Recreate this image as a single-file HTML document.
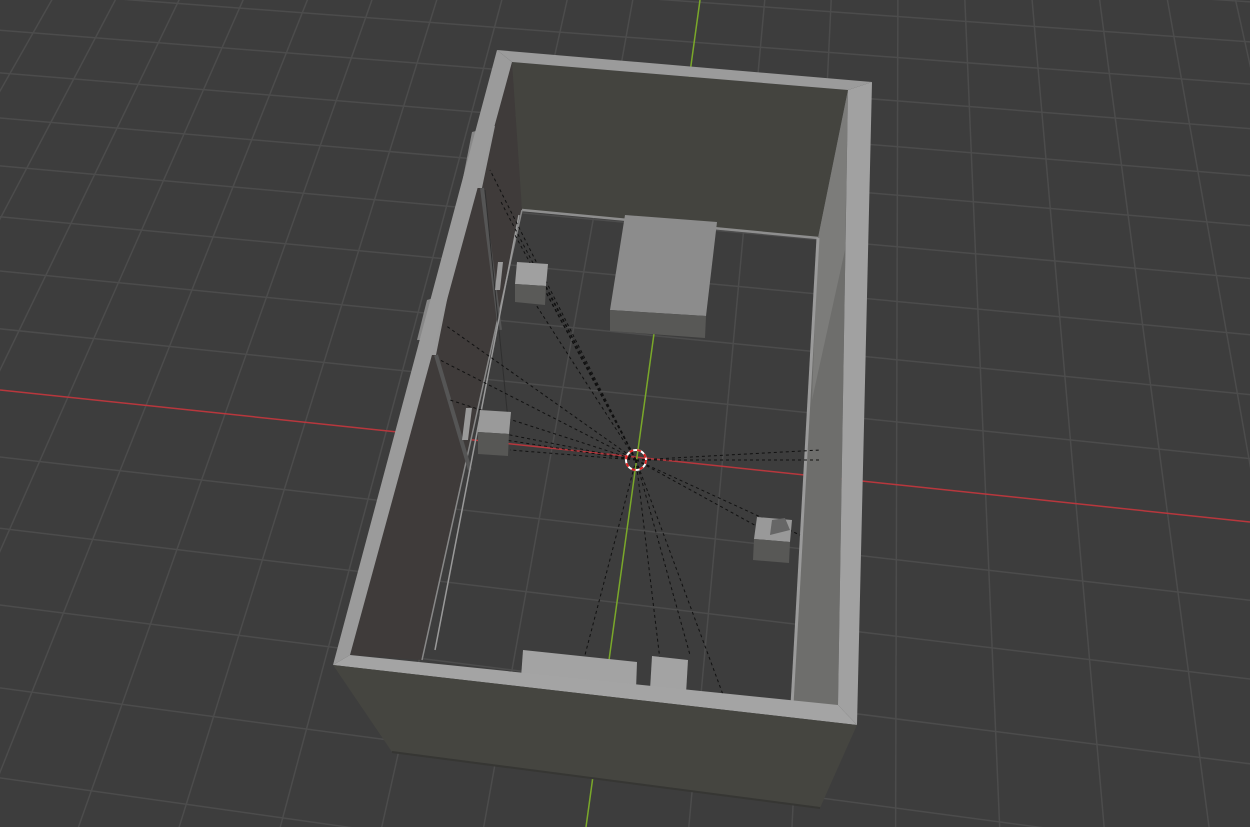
<!DOCTYPE html>
<html><head><meta charset="utf-8"><style>
html,body{margin:0;padding:0;background:#3d3d3d;overflow:hidden;width:1250px;height:827px}
svg{display:block}
</style></head><body>
<svg id="s" width="1250" height="827" viewBox="0 0 1250 827" xmlns="http://www.w3.org/2000/svg">
<rect width="1250" height="827" fill="#3d3d3d"/>
<g id="grid" stroke="#4c4c4c" stroke-width="1.5" fill="none"></g>
<!-- axes -->
<line x1="0" y1="390" x2="1250" y2="522" stroke="#b8373d" stroke-width="1.5"/>
<line x1="700" y1="0" x2="586" y2="827" stroke="#7aa82a" stroke-width="1.5"/>

<!-- left wall interior face -->
<polygon points="512,62 522,210 422,660 350,655" fill="#3f3b3a"/>
<!-- back wall interior -->
<polygon points="512,62 848,90 818,238 522,210" fill="#44443f"/>
<line x1="522" y1="210" x2="818" y2="238" stroke="#8e8e8e" stroke-width="2.5"/>
<!-- right wall inner face -->
<polygon points="848,90 838,705 792,705 818,238" fill="#6e6e6c"/>
<polygon points="848,90 818,238 812,400 845,250" fill="#7c7c7a"/>
<line x1="818" y1="238" x2="792" y2="705" stroke="#9a9a9a" stroke-width="3"/>
<line x1="522" y1="210" x2="422" y2="660" stroke="#888" stroke-width="1.5"/>

<!-- window details left -->
<polygon points="483,128 495,126 482,188 470,188" fill="#9a9a9a"/>
<polygon points="472,132 480,130 470,178 463,178" fill="#888"/>
<polygon points="438,287 450,285 436,355 424,355" fill="#9a9a9a"/>
<polygon points="427,300 434,298 423,340 417,340" fill="#888"/>
<line x1="482" y1="188" x2="500" y2="330" stroke="#555" stroke-width="4"/>
<line x1="436" y1="355" x2="470" y2="470" stroke="#555" stroke-width="4"/>
<line x1="485" y1="190" x2="508" y2="420" stroke="#2f2f2f" stroke-width="1"/>
<polygon points="498,262 503,262 500,290 495,290" fill="#9a9a9a"/>
<polygon points="466,408 472,408 468,440 462,440" fill="#9a9a9a"/>
<line x1="519" y1="215" x2="435" y2="650" stroke="#9a9a9a" stroke-width="1.5"/>

<!-- dashed light lines -->
<g stroke="#111" stroke-width="1" stroke-dasharray="3,3" fill="none">
<line x1="636" y1="460" x2="490" y2="170"/>
<line x1="636" y1="460" x2="500" y2="200"/>
<line x1="636" y1="460" x2="515" y2="235"/>
<line x1="636" y1="460" x2="520" y2="280"/>
<line x1="636" y1="460" x2="535" y2="265"/>
<line x1="636" y1="460" x2="545" y2="290"/>
<line x1="636" y1="460" x2="550" y2="300"/>
<line x1="636" y1="460" x2="445" y2="325"/>
<line x1="636" y1="460" x2="440" y2="360"/>
<line x1="636" y1="460" x2="450" y2="400"/>
<line x1="636" y1="460" x2="485" y2="430"/>
<line x1="636" y1="460" x2="505" y2="440"/>
<line x1="636" y1="460" x2="510" y2="450"/>
<line x1="636" y1="460" x2="820" y2="450"/>
<line x1="636" y1="460" x2="820" y2="460"/>
<line x1="636" y1="460" x2="760" y2="528"/>
<line x1="636" y1="460" x2="800" y2="535"/>
<line x1="636" y1="460" x2="585" y2="655"/>
<line x1="636" y1="460" x2="660" y2="660"/>
<line x1="636" y1="460" x2="725" y2="700"/>
<line x1="636" y1="460" x2="690" y2="655"/>
</g>

<!-- bed -->
<polygon points="625,215 717,222 706,316 610,310" fill="#8c8c8c"/>
<polygon points="610,310 706,316 705,338 610,331" fill="#585856"/>
<!-- small boxes -->
<polygon points="517,262 548,264 546,286 515,284" fill="#a0a0a0"/>
<polygon points="515,284 546,286 545,305 515,302" fill="#5a5a58"/>
<polygon points="480,410 511,412 509,434 478,432" fill="#9a9a9a"/>
<polygon points="478,432 509,434 508,456 478,454" fill="#575755"/>
<polygon points="757,517 792,520 790,542 754,539" fill="#999"/>
<polygon points="754,539 790,542 789,563 753,560" fill="#585856"/>
<polygon points="772,520 785,518 790,530 770,535" fill="#666"/>
<!-- front boxes -->
<polygon points="523,650 637,662 636,690 521,678" fill="#a3a3a3"/>
<polygon points="652,656 688,660 686,694 650,690" fill="#a3a3a3"/>

<!-- rim -->
<polygon points="497,50 512,62 350,655 333,665" fill="#9b9b9b"/>
<polygon points="497,50 872,82 848,90 512,62" fill="#9b9b9b"/>
<polygon points="872,82 857,725 838,705 848,90" fill="#a1a1a1"/>
<polygon points="333,665 350,655 838,705 857,725" fill="#a4a4a4"/>
<!-- front face -->
<polygon points="333,665 857,725 820,808 392,752" fill="#454540"/>
<line x1="392" y1="752" x2="820" y2="808" stroke="#363633" stroke-width="2"/>

<!-- 3d cursor -->
<circle cx="636" cy="460" r="10" fill="none" stroke="#fff" stroke-width="2"/>
<circle cx="636" cy="460" r="10" fill="none" stroke="#d22" stroke-width="2" stroke-dasharray="4,4"/>
</svg>
<script>
(function(){
var O=[636,460],VU=[-11875,-904],VV=[902,-1494],a=-0.0068,b=0.034;
function P(u,v){var d=a*u+b*v+1;return [(a*u*VU[0]+b*v*VV[0]+O[0])/d,(a*u*VU[1]+b*v*VV[1]+O[1])/d];}
var g=document.getElementById('grid'),h='';
for(var u=-40;u<=40;u++){if(u==0)continue;var p=P(u,-12),q=P(u,40);h+='<line x1="'+p[0]+'" y1="'+p[1]+'" x2="'+q[0]+'" y2="'+q[1]+'"/>';}
for(var v=-12;v<=40;v++){if(v==0)continue;var p=P(-40,v),q=P(40,v);h+='<line x1="'+p[0]+'" y1="'+p[1]+'" x2="'+q[0]+'" y2="'+q[1]+'"/>';}
g.innerHTML=h;
})();
</script>
</body></html>
